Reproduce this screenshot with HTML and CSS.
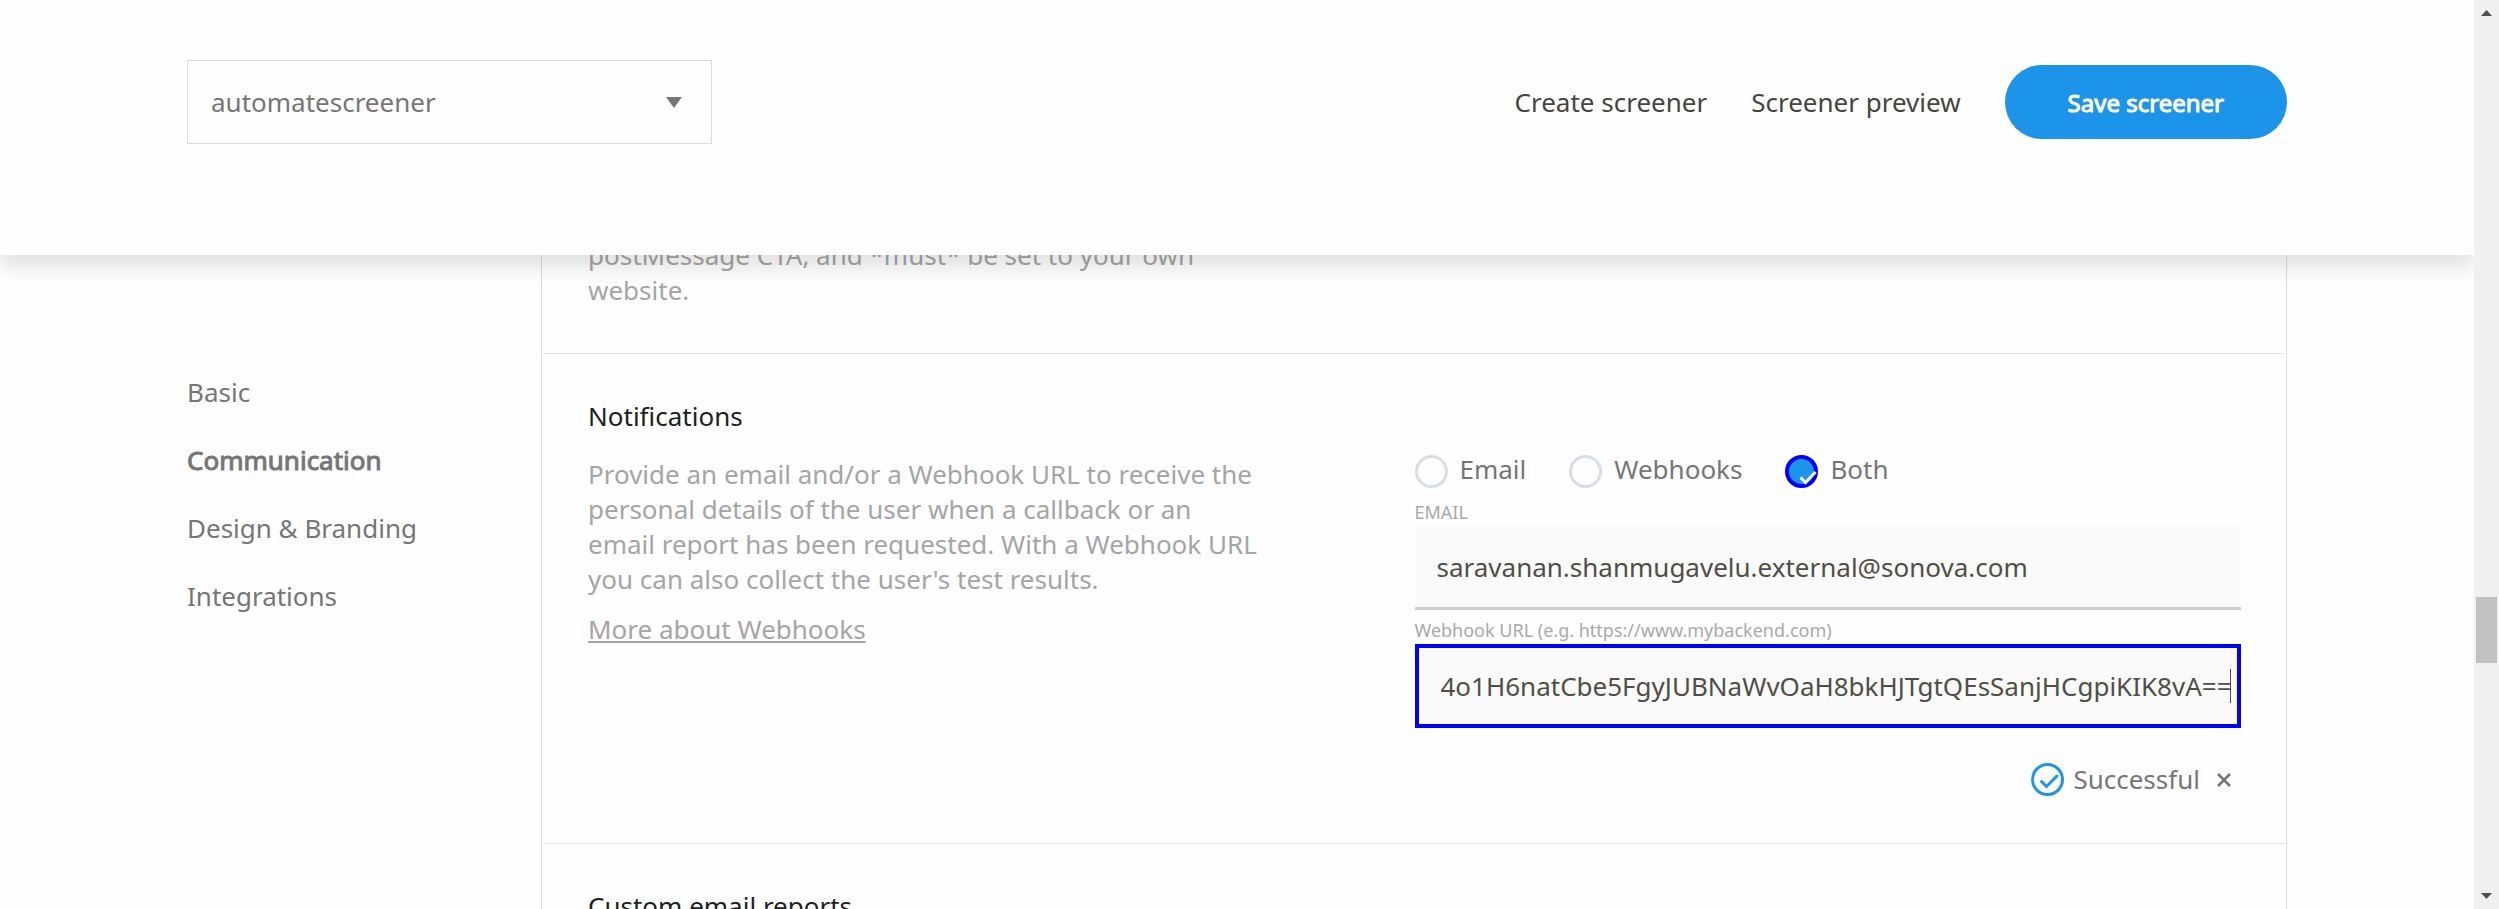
FILE: index.html
```html
<!DOCTYPE html>
<html lang="en">
<head>
<meta charset="utf-8">
<title>Screener settings</title>
<link rel="stylesheet" href="styles.css">
</head>
<body>
<div class="page">
  <header class="topbar">
    <div class="picker">
      <select class="picker-select" aria-label="Screener">
        <option>automatescreener</option>
      </select>
      <svg class="picker-arrow" width="16" height="11" viewBox="0 0 16 11" aria-hidden="true"><path d="M0 0h16L8 11z" fill="#767676"/></svg>
    </div>
    <nav class="actions" aria-label="Screener actions">
      <a class="action-link" href="#create">Create screener</a>
      <a class="action-link" href="#preview">Screener preview</a>
      <button class="save" type="button">Save screener</button>
    </nav>
  </header>

  <main class="content">
    <nav class="sidebar" aria-label="Settings">
      <a class="side-link" href="#basic">Basic</a>
      <a class="side-link side-link-active" href="#communication">Communication</a>
      <a class="side-link" href="#design">Design &amp; Branding</a>
      <a class="side-link" href="#integrations">Integrations</a>
    </nav>

    <div class="panel">
      <section class="section section-first">
        <div class="info">
          <p class="text">postMessage CTA, and *must* be set to your own website.</p>
        </div>
      </section>

      <section class="section">
        <div class="info">
          <h2 class="title">Notifications</h2>
          <p class="text">Provide an email and/or a Webhook URL to receive the personal details of the user when a callback or an email report has been requested. With a Webhook URL you can also collect the user's test results.</p>
          <a class="more" href="#webhooks">More about Webhooks</a>
        </div>
        <form class="form">
          <div class="radios">
            <label class="radio"><input class="radio-input" type="radio" name="channel"><span>Email</span></label>
            <label class="radio"><input class="radio-input" type="radio" name="channel"><span>Webhooks</span></label>
            <label class="radio">
              <span class="radio-box">
                <input class="radio-input" type="radio" name="channel" checked>
                <svg class="radio-tick" width="20" height="15" viewBox="0 0 20 15" aria-hidden="true"><path d="M2.500 7.500l5 5L17.500 2" fill="none" stroke="#fff" stroke-width="3"/></svg>
              </span>
              <span>Both</span>
            </label>
          </div>
          <label class="label" for="email">EMAIL</label>
          <input class="input" id="email" type="text" value="saravanan.shanmugavelu.external@sonova.com">
          <label class="label" for="hook">Webhook URL (e.g. https://www.mybackend.com)</label>
          <div class="field">
            <input class="input input-focus" id="hook" type="text" value="4o1H6natCbe5FgyJUBNaWvOaH8bkHJTgtQEsSanjHCgpiKIK8vA==">
            <span class="caret"></span>
          </div>
          <div class="status" role="status">
            <svg width="33" height="33" viewBox="0 0 33 33" aria-hidden="true"><circle cx="16.500" cy="16.500" r="15" fill="none" stroke="#1c94e9" stroke-width="3"/><path d="M10.500 18.500l5 5L26 13" fill="none" stroke="#1c94e9" stroke-width="3" stroke-linecap="round"/></svg>
            <span>Successful</span>
            <button class="dismiss" type="button" aria-label="Dismiss"><svg width="14" height="14" viewBox="0 0 14 14" aria-hidden="true"><path d="M1 1l12 12M13 1L1 13" stroke="#767676" stroke-width="2.500"/></svg></button>
          </div>
        </form>
      </section>

      <section class="section">
        <div class="info">
          <h2 class="title">Custom email reports</h2>
        </div>
      </section>
    </div>
  </main>
</div>

<div class="scrollbar" aria-hidden="true">
  <svg width="11" height="6" viewBox="0 0 11 6"><path d="M5.500 0L11 6H0z" fill="#505050"/></svg>
  <div class="track"><div class="thumb"></div></div>
  <svg width="11" height="6" viewBox="0 0 11 6"><path d="M5.500 6L11 0H0z" fill="#505050"/></svg>
</div>
</body>
</html>
```

FILE: styles.css
```css
* {
  box-sizing: border-box;
}

body {
  display: flex;
  height: 100vh;
  margin: 0;
  overflow: hidden;
  background: #fefefe;
  color: #767676;
  font: 26px/35px "Noto Sans", "Open Sans", sans-serif;
}

input,
select,
button {
  font: inherit;
}

.page {
  display: grid;
  grid-template-columns: minmax(0, 1fr);
  flex: 1;
  min-width: 0;
  overflow: hidden;
}

.topbar {
  z-index: 1;
  grid-area: 1 / 1;
  display: flex;
  align-self: start;
  align-items: center;
  justify-content: space-between;
  padding: 60px 187px 111px;
  background: #fefefe;
  box-shadow: 0 13px 18px rgba(0, 0, 0, 0.11);
}

.picker {
  display: grid;
  flex: 0 1 525px;
  align-items: center;
}

.picker-select {
  grid-area: 1 / 1;
  height: 84px;
  padding: 0 48px 0 23px;
  border: 1px solid #dcdcdc;
  border-radius: 0;
  background: #fefefe;
  color: #767676;
  appearance: none;
}

.picker-arrow {
  grid-area: 1 / 1;
  justify-self: end;
  margin-right: 30px;
  pointer-events: none;
}

.actions {
  display: flex;
  align-items: center;
  gap: 44px;
}

.action-link {
  color: #46453d;
  text-decoration: none;
}

.save {
  height: 74px;
  padding: 0 63px;
  border: 0;
  border-radius: 37px;
  background: #1c94e9;
  color: #fff;
  font-size: 24px;
  -webkit-text-stroke: 1px #fff;
}

.content {
  grid-area: 1 / 1;
  display: grid;
  grid-template-columns: 354px minmax(0, 1fr);
  padding: 0 187px;
}

.sidebar {
  display: flex;
  flex-direction: column;
  gap: 33px;
  padding-top: 375px;
}

.side-link {
  color: #767676;
  text-decoration: none;
}

.side-link-active {
  -webkit-text-stroke: 1px #767676;
}

.panel {
  padding: 0 1px;
  border: solid #dcdcdc;
  border-width: 0 1px;
}

.section {
  display: grid;
  grid-template-columns: 1fr 1fr;
  padding: 45px 44px 46px 45px;
  border-bottom: 1px solid #e4e4e4;
}

.section-first {
  padding-top: 238px;
  padding-bottom: 45px;
}

.info {
  padding-right: 154px;
}

.title {
  margin: 0 0 23px;
  color: #212121;
  font-size: 26px;
  font-weight: 400;
}

.text {
  margin: 0;
  color: #a5a5a5;
}

.more {
  display: inline-block;
  margin-top: 15px;
  color: #a5a5a5;
}

.form {
  display: flex;
  flex-direction: column;
  padding-top: 53px;
}

.radios {
  display: flex;
  gap: 43px;
  margin-bottom: 11px;
}

.radio {
  display: flex;
  gap: 12px;
}

.radio-box {
  display: grid;
  align-self: start;
}

.radio-input {
  grid-area: 1 / 1;
  width: 33px;
  height: 33px;
  margin: 3px 0 0;
  border: 3px solid #d8dfe4;
  border-radius: 50%;
  background: #fefefe;
  appearance: none;
}

.radio-input:checked {
  border: 4px solid #0000ff;
  background: #1c94e9;
}

.radio-tick {
  grid-area: 1 / 1;
  place-self: end;
  margin-bottom: 3px;
}

.label {
  color: #a9a9a9;
  font-size: 18px;
  line-height: 27px;
}

.input {
  width: 100%;
  height: 84px;
  margin-bottom: 7px;
  padding: 0 22px;
  border: 0 solid #cccccc;
  border-bottom-width: 3px;
  border-radius: 0;
  background: #fafafa;
  color: #504f46;
}

.input-focus {
  padding-right: 4px;
  border: 4px solid #0000ff;
}

.field {
  position: relative;
}

.caret {
  position: absolute;
  top: 25px;
  right: 10px;
  width: 1px;
  height: 34px;
  background: #504f46;
}

.status {
  display: flex;
  align-items: center;
  justify-content: flex-end;
  gap: 9px;
  margin-top: 27px;
  padding-right: 10px;
}

.dismiss {
  display: flex;
  margin-left: 8px;
  padding: 0;
  border: 0;
  background: none;
}

.scrollbar {
  display: flex;
  flex: 0 0 25px;
  flex-direction: column;
  align-items: center;
  padding: 10px 2px;
  background: #f0f0f0;
}

.track {
  flex: 1;
  align-self: stretch;
  padding-top: 581px;
}

.thumb {
  height: 66px;
  background: #c1c1c1;
}
```
